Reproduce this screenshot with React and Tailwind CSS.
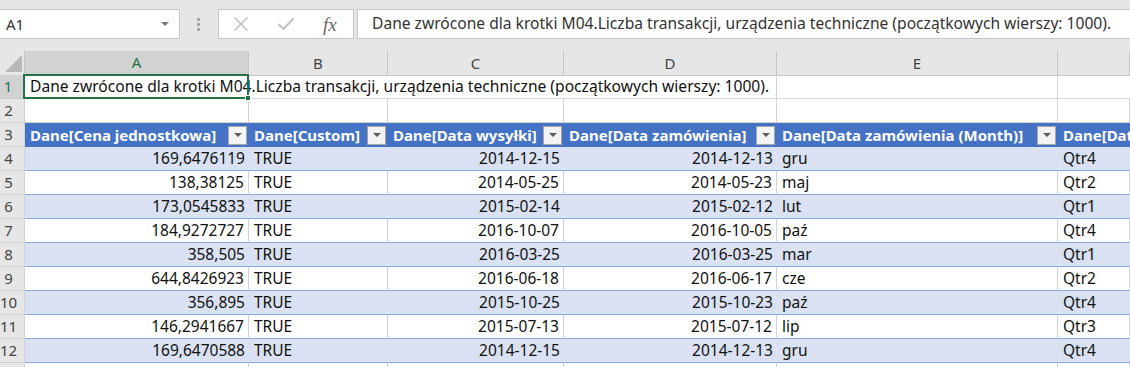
import React from "react";

const font = { fontFamily: '"Noto Sans", "Liberation Sans", sans-serif' };

const headers = [
  "Dane[Cena jednostkowa]",
  "Dane[Custom]",
  "Dane[Data wysyłki]",
  "Dane[Data zamówienia]",
  "Dane[Data zamówienia (Month)]",
  "Dane[Dat",
];

const rows = [
  ["169,6476119", "TRUE", "2014-12-15", "2014-12-13", "gru", "Qtr4"],
  ["138,38125", "TRUE", "2014-05-25", "2014-05-23", "maj", "Qtr2"],
  ["173,0545833", "TRUE", "2015-02-14", "2015-02-12", "lut", "Qtr1"],
  ["184,9272727", "TRUE", "2016-10-07", "2016-10-05", "paź", "Qtr4"],
  ["358,505", "TRUE", "2016-03-25", "2016-03-25", "mar", "Qtr1"],
  ["644,8426923", "TRUE", "2016-06-18", "2016-06-17", "cze", "Qtr2"],
  ["356,895", "TRUE", "2015-10-25", "2015-10-23", "paź", "Qtr4"],
  ["146,2941667", "TRUE", "2015-07-13", "2015-07-12", "lip", "Qtr3"],
  ["169,6470588", "TRUE", "2014-12-15", "2014-12-13", "gru", "Qtr4"],
];

const cols = "grid grid-cols-[25px_224px_139px_176px_213px_281px_1fr]";
const text = "Dane zwrócone dla krotki M04.Liczba transakcji, urządzenia techniczne (początkowych wierszy: 1000).";

function RowHead({ n, active }) {
  return (
    <div
      className={
        "h-[24px] flex items-center justify-center pr-[7px] border-b border-r text-[15px] " +
        (active
          ? "bg-[#d2d2d2] text-[#217346] border-b-[#c6c6c6] border-r-[#217346] border-r-2"
          : "bg-[#e6e6e6] text-[#444] border-[#d4d4d4]")
      }
    >
      {n}
    </div>
  );
}

function FilterBtn() {
  return (
    <div className="w-[19px] h-[19px] bg-[#f3f3f3] border border-[#a6a6a6] flex items-center justify-center shrink-0">
      <div className="w-0 h-0 border-l-[4px] border-r-[4px] border-t-[4px] border-l-transparent border-r-transparent border-t-[#5f5f5f]" />
    </div>
  );
}

export default function App() {
  return (
    <div className="w-[1130px] h-[367px] overflow-hidden bg-white text-[#111]" style={font}>
      {/* formula bar */}
      <div className="h-[51px] bg-[#e6e6e6] flex items-start pt-[9px]">
        <div className="w-[180px] h-[30px] bg-white border border-[#c6c6c6] border-l-0 flex items-center justify-between pl-[6px] pr-[10px]">
          <span className="text-[15px] text-[#333]">A1</span>
          <div className="w-0 h-0 border-l-[4px] border-r-[4px] border-t-[4px] border-l-transparent border-r-transparent border-t-[#777]" />
        </div>
        <div className="w-[38px] h-[30px] flex flex-col items-center justify-center gap-[2px] pr-[2px]">
          <div className="w-[3px] h-[3px] bg-[#a6a6a6]" />
          <div className="w-[3px] h-[3px] bg-[#a6a6a6]" />
          <div className="w-[3px] h-[3px] bg-[#a6a6a6]" />
        </div>
        <div className="w-[136px] h-[30px] bg-white border border-[#c6c6c6] flex items-center">
          <svg width="16" height="16" viewBox="0 0 16 16" className="ml-[14px]">
            <path d="M1.5 1.5 L14.5 14.5 M14.5 1.5 L1.5 14.5" stroke="#c2c2c2" strokeWidth="1.6" fill="none" />
          </svg>
          <svg width="18" height="14" viewBox="0 0 18 14" className="ml-[28px]">
            <path d="M1.5 7 L6.5 12 L16.5 1.5" stroke="#c2c2c2" strokeWidth="2.2" fill="none" />
          </svg>
          <span className="ml-[28px] text-[19px] italic text-[#666] leading-none" style={{ fontFamily: '"Liberation Serif", serif' }}>
            fx
          </span>
        </div>
        <div className="ml-[3px] flex-1 h-[30px] bg-white border border-[#c6c6c6] border-r-0 flex items-center pl-[14px] text-[15.6px] text-[#333] whitespace-nowrap">
          {text}
        </div>
      </div>

      {/* column headers */}
      <div className={cols + " h-[24px] bg-[#e6e6e6]"}>
        <div className="border-r border-b border-[#c6c6c6] flex items-end justify-end pr-[2px] pb-[3px]">
          <svg width="17" height="17" viewBox="0 0 17 17">
            <path d="M17 0 L17 17 L0 17 Z" fill="#b8b8b8" />
          </svg>
        </div>
        <div className="bg-[#d2d2d2] border-r border-[#c6c6c6] border-b-2 border-b-[#217346] flex items-center justify-center text-[15px] text-[#217346]">A</div>
        {["B", "C", "D", "E", ""].map((l, i) => (
          <div key={i} className="border-r border-b border-[#c6c6c6] flex items-center justify-center text-[15px] text-[#444]">
            {l}
          </div>
        ))}
      </div>

      {/* row 1 */}
      <div className={cols}>
        <RowHead n={1} active />
        <div className="col-span-4 h-[24px] border-r border-b border-[#d4d4d4] relative flex items-center pl-[5px] text-[15.6px] whitespace-nowrap">
          {text}
          <div className="absolute left-[-2px] top-[-1px] w-[226px] h-[25px] border-2 border-[#217346]" />
          <div className="absolute left-[220px] top-[20px] w-[6px] h-[6px] bg-[#217346] border border-white" />
        </div>
        <div className="h-[24px] border-r border-b border-[#d4d4d4]" />
        <div className="h-[24px] border-b border-[#d4d4d4]" />
      </div>

      {/* row 2 */}
      <div className={cols}>
        <RowHead n={2} />
        {[0, 1, 2, 3, 4, 5].map((i) => (
          <div key={i} className="h-[24px] border-r border-b border-[#d4d4d4]" />
        ))}
      </div>

      {/* table header row */}
      <div className={cols}>
        <RowHead n={3} />
        {headers.map((h, i) => (
          <div key={i} className="h-[24px] bg-[#4472c4] flex items-center justify-between pl-[5px] pr-[2px] text-[15px] font-bold text-white whitespace-nowrap overflow-hidden">
            <span>{h}</span>
            {i < 5 && <FilterBtn />}
          </div>
        ))}
      </div>

      {/* data rows */}
      {rows.map((r, ri) => {
        const blue = ri % 2 === 0;
        return (
          <div key={ri} className={cols}>
            <RowHead n={ri + 4} />
            {r.map((c, ci) => (
              <div
                key={ci}
                className={
                  "h-[24px] flex items-center text-[15.5px] whitespace-nowrap border-b border-b-[#8ea9db] " +
                  (blue ? "bg-[#d9e1f2] " : "bg-white border-r border-r-[#d4d4d4] ") +
                  (ci === 0 || ci === 2 || ci === 3 ? "justify-end pr-[4px]" : "pl-[5px]")
                }
              >
                {c}
              </div>
            ))}
          </div>
        );
      })}

      {/* row 13 */}
      <div className={cols}>
        <RowHead n="" />
        {[0, 1, 2, 3, 4, 5].map((i) => (
          <div key={i} className="h-[24px] border-r border-b border-[#d4d4d4]" />
        ))}
      </div>
    </div>
  );
}
